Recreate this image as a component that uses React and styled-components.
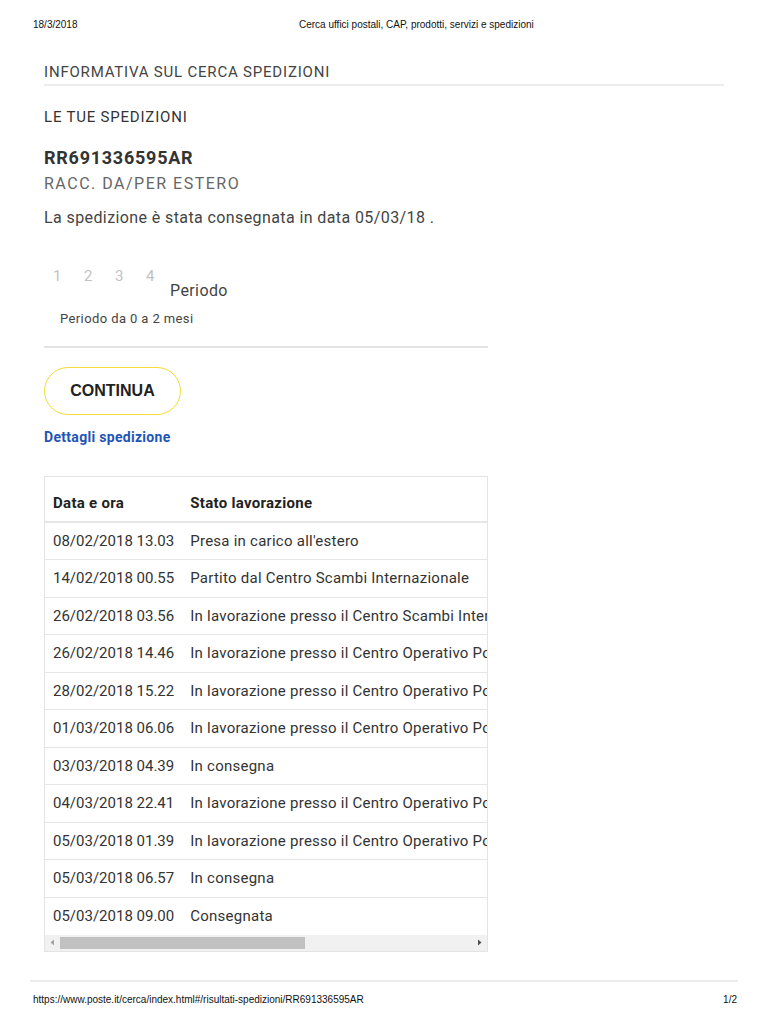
import styled, { createGlobalStyle } from "styled-components";

const GlobalStyle = createGlobalStyle`
  html, body {
    margin: 0;
    padding: 0;
    background: #fff;
  }
  body {
    font-family: Roboto, "Liberation Sans", Arial, sans-serif;
    color: #333;
  }
`;

const Page = styled.div`
  width: 768px;
  height: 1024px;
  display: flex;
  flex-direction: column;
  overflow: hidden;
`;

const PrintBar = styled.div`
  height: ${(props) => props.h}px;
  display: flex;
  align-items: center;
  padding: 0 31px 0 33px;
  font-family: "Liberation Sans", Arial, sans-serif;
  font-size: 10px;
  letter-spacing: 0;
  color: #111;
`;

const PrintDate = styled.span`
  width: 266px;
`;

const PrintTitle = styled.span`
  flex: 1;
`;

const Main = styled.main`
  flex: 1;
  padding: 15px 44px 0 44px;
  display: flex;
  flex-direction: column;
`;

const Informativa = styled.div`
  font-size: 15px;
  line-height: 18px;
  color: #444;
  letter-spacing: 0.8px;
  padding-bottom: 3px;
  border-bottom: 2px solid #ececec;
  width: 680px;
`;

const Section = styled.div`
  font-size: 15px;
  line-height: 18px;
  color: #333;
  letter-spacing: 0.8px;
  margin-top: 22px;
`;

const Code = styled.div`
  font-size: 18px;
  line-height: 22px;
  font-weight: 700;
  color: #333;
  letter-spacing: 0.75px;
  margin-top: 21px;
`;

const Kind = styled.div`
  font-size: 16px;
  line-height: 20px;
  color: #666;
  margin-top: 5px;
  letter-spacing: 1.5px;
`;

const Status = styled.div`
  font-size: 16px;
  line-height: 20px;
  color: #444;
  margin-top: 14px;
  letter-spacing: 0.4px;
`;

const Steps = styled.div`
  display: flex;
  align-items: flex-start;
  margin-top: 39px;
  padding-left: 9px;
`;

const StepNum = styled.span`
  font-size: 15px;
  line-height: 18px;
  color: #c2c2c2;
  width: 31px;
`;

const StepLabel = styled.span`
  font-size: 16px;
  line-height: 20px;
  color: #444;
  letter-spacing: 0.4px;
  margin-top: 14px;
  margin-left: -7px;
`;

const Period = styled.div`
  font-size: 13px;
  line-height: 16px;
  color: #444;
  letter-spacing: 0.4px;
  margin-top: 10px;
  padding-left: 16px;
  padding-bottom: 19px;
  border-bottom: 2px solid #e3e3e3;
  width: 428px;
`;

const Continue = styled.button`
  margin-top: 19px;
  width: 137px;
  height: 48px;
  border: 1.5px solid #f2dc3a;
  border-radius: 24px;
  background: #fff;
  font-family: "Liberation Sans", Arial, sans-serif;
  font-size: 16px;
  font-weight: 700;
  color: #222;
  cursor: pointer;
`;

const DetailsLink = styled.a`
  margin-top: 14px;
  font-size: 14px;
  line-height: 17px;
  font-weight: 700;
  color: #1f55b6;
  letter-spacing: 0.3px;
  text-decoration: none;
`;

const TableBox = styled.div`
  margin-top: 30px;
  width: 442px;
  border: 1px solid #e4e4e4;
  display: flex;
  flex-direction: column;
`;

const Clip = styled.div`
  overflow: hidden;
`;

const Table = styled.table`
  border-collapse: collapse;
  width: 780px;
  font-size: 15px;
  color: #333;
  white-space: nowrap;
`;

const HeadCell = styled.th`
  height: 37px;
  padding: 7px 8px 0 8px;
  text-align: left;
  font-weight: 700;
  color: #222;
  border-bottom: 2px solid #e6e6e6;
  letter-spacing: 0.3px;
  width: ${(props) => (props.first ? "118px" : "auto")};
`;

const Cell = styled.td`
  height: 37.5px;
  box-sizing: border-box;
  padding: 0 8px;
  border-bottom: ${(props) => (props.last ? "none" : "1px solid #e6e6e6")};
  letter-spacing: ${(props) => (props.wide ? "0.25px" : "0")};
`;

const Scrollbar = styled.div`
  height: 16px;
  background: #f1f1f1;
  display: flex;
  align-items: center;
`;

const Arrow = styled.span`
  width: 15px;
  display: flex;
  justify-content: center;
`;

const Track = styled.div`
  flex: 1;
  height: 12px;
  display: flex;
`;

const Thumb = styled.div`
  height: 12px;
  background: #c1c1c1;
`;

const Footer = styled.div`
  margin: 0 30px;
  border-top: 2px solid #ececec;
`;

const rows = [
  ["08/02/2018 13.03", "Presa in carico all'estero"],
  ["14/02/2018 00.55", "Partito dal Centro Scambi Internazionale"],
  ["26/02/2018 03.56", "In lavorazione presso il Centro Scambi Internazionale"],
  ["26/02/2018 14.46", "In lavorazione presso il Centro Operativo Postale"],
  ["28/02/2018 15.22", "In lavorazione presso il Centro Operativo Postale"],
  ["01/03/2018 06.06", "In lavorazione presso il Centro Operativo Postale"],
  ["03/03/2018 04.39", "In consegna"],
  ["04/03/2018 22.41", "In lavorazione presso il Centro Operativo Postale"],
  ["05/03/2018 01.39", "In lavorazione presso il Centro Operativo Postale"],
  ["05/03/2018 06.57", "In consegna"],
  ["05/03/2018 09.00", "Consegnata"],
];

const Triangle = ({ dir }) => (
  <svg width="5" height="7" viewBox="0 0 5 7">
    <path d={dir === "left" ? "M4 0.5 L0.5 3.5 L4 6.5 Z" : "M1 0.5 L4.5 3.5 L1 6.5 Z"} fill={dir === "left" ? "#a3a3a3" : "#505050"} />
  </svg>
);

const App = () => {
  const thumbShare = 245 / 412;

  return (
    <Page>
      <GlobalStyle />
      <PrintBar h={48}>
        <PrintDate>18/3/2018</PrintDate>
        <PrintTitle>Cerca uffici postali, CAP, prodotti, servizi e spedizioni</PrintTitle>
      </PrintBar>
      <Main>
        <Informativa>INFORMATIVA SUL CERCA SPEDIZIONI</Informativa>
        <Section>LE TUE SPEDIZIONI</Section>
        <Code>RR691336595AR</Code>
        <Kind>RACC. DA/PER ESTERO</Kind>
        <Status>La spedizione è stata consegnata in data 05/03/18 .</Status>
        <Steps>
          {[1, 2, 3, 4].map((n) => (
            <StepNum key={n}>{n}</StepNum>
          ))}
          <StepLabel>Periodo</StepLabel>
        </Steps>
        <Period>Periodo da 0 a 2 mesi</Period>
        <Continue>CONTINUA</Continue>
        <DetailsLink href="#">Dettagli spedizione</DetailsLink>
        <TableBox>
          <Clip>
            <Table>
              <thead>
                <tr>
                  <HeadCell first>Data e ora</HeadCell>
                  <HeadCell>Stato lavorazione</HeadCell>
                </tr>
              </thead>
              <tbody>
                {rows.map(([date, state], i) => (
                  <tr key={date + i}>
                    <Cell last={i === rows.length - 1}>{date}</Cell>
                    <Cell wide last={i === rows.length - 1}>{state}</Cell>
                  </tr>
                ))}
              </tbody>
            </Table>
          </Clip>
          <Scrollbar>
            <Arrow>
              <Triangle dir="left" />
            </Arrow>
            <Track>
              <Thumb style={{ width: `${thumbShare * 100}%` }} />
            </Track>
            <Arrow>
              <Triangle dir="right" />
            </Arrow>
          </Scrollbar>
        </TableBox>
      </Main>
      <Footer />
      <PrintBar h={34}>
        <PrintTitle>https://www.poste.it/cerca/index.html#/risultati-spedizioni/RR691336595AR</PrintTitle>
        <span>1/2</span>
      </PrintBar>
      <PrintBar h={8} />
    </Page>
  );
};

export default App;
